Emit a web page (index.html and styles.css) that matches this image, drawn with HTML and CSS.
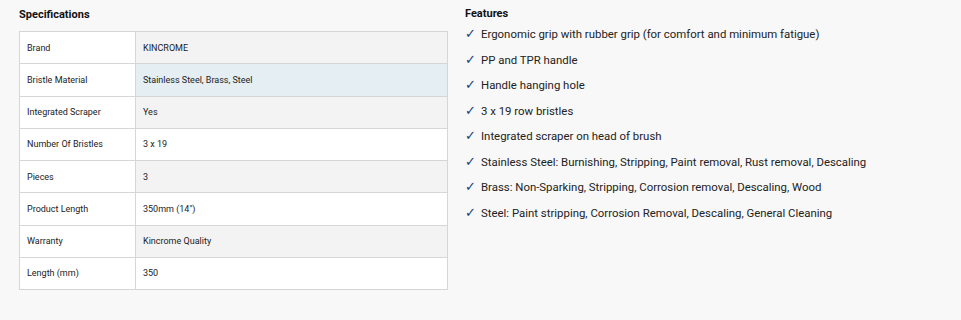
FILE: index.html
```html
<!DOCTYPE html>
<html>
<head>
<meta charset="utf-8">
<link rel="stylesheet" href="styles.css">
</head>
<body>
<div class="page">
  <section class="specs">
    <h2 class="title">Specifications</h2>
    <table class="spec-table">
      <tr><td class="label">Brand</td><td class="value">KINCROME</td></tr>
      <tr class="hover"><td class="label">Bristle Material</td><td class="value">Stainless Steel, Brass, Steel</td></tr>
      <tr><td class="label">Integrated Scraper</td><td class="value">Yes</td></tr>
      <tr><td class="label">Number Of Bristles</td><td class="value">3 x 19</td></tr>
      <tr><td class="label">Pieces</td><td class="value">3</td></tr>
      <tr><td class="label">Product Length</td><td class="value">350mm (14")</td></tr>
      <tr><td class="label">Warranty</td><td class="value">Kincrome Quality</td></tr>
      <tr><td class="label">Length (mm)</td><td class="value">350</td></tr>
    </table>
  </section>
  <section class="features">
    <h2 class="ftitle">Features</h2>
    <ul class="flist">
      <li><span class="tick">✓</span>Ergonomic grip with rubber grip (for comfort and minimum fatigue)</li>
      <li><span class="tick">✓</span>PP and TPR handle</li>
      <li><span class="tick">✓</span>Handle hanging hole</li>
      <li><span class="tick">✓</span>3 x 19 row bristles</li>
      <li><span class="tick">✓</span>Integrated scraper on head of brush</li>
      <li><span class="tick">✓</span>Stainless Steel: Burnishing, Stripping, Paint removal, Rust removal, Descaling</li>
      <li><span class="tick">✓</span>Brass: Non-Sparking, Stripping, Corrosion removal, Descaling, Wood</li>
      <li><span class="tick">✓</span>Steel: Paint stripping, Corrosion Removal, Descaling, General Cleaning</li>
    </ul>
  </section>
</div>
</body>
</html>
```
FILE: styles.css
```css
html, body {
  margin: 0;
  padding: 0;
  background: #f8f8f8;
  font-family: Roboto, "Liberation Sans", sans-serif;
  color: #222;
}
.page {
  display: flex;
  padding: 0 0 0 19px;
  gap: 17px;
}
.specs {
  width: 429px;
}
.title {
  margin: 8px 0 0;
  height: 23px;
  font-size: 11px;
  font-weight: bold;
  line-height: 14px;
  color: #111;
}
.spec-table {
  width: 429px;
  border-collapse: collapse;
  font-size: 9px;
  color: #222;
}
.spec-table td {
  border: 1px solid #d6d6d6;
  height: 32.25px;
  padding: 0 0 0 7px;
  vertical-align: middle;
  box-sizing: border-box;
}
.spec-table .label {
  width: 116px;
  background: #fff;
}
.spec-table .value {
  background: #fff;
}
.spec-table tr:nth-child(odd) .value {
  background: #f3f3f3;
}
.spec-table tr.hover .value {
  background: #e4eef3;
}
.features {
  flex: 1;
}
.ftitle {
  margin: 7px 0 0;
  font-size: 11px;
  font-weight: bold;
  line-height: 14px;
  color: #111;
}
.flist {
  list-style: none;
  margin: 0;
  padding: 0;
  font-size: 11.4px;
}
.flist li {
  height: 25.5px;
  line-height: 25.5px;
}
.tick {
  display: inline-block;
  width: 16px;
  color: #1e3b78;
  font-size: 13px;
}
```
